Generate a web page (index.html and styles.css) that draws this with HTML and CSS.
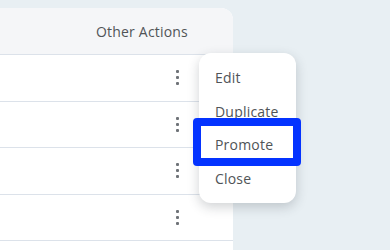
FILE: index.html
```html
<!DOCTYPE html>
<html>
<head>
<meta charset="utf-8">
<link rel="stylesheet" href="styles.css">
</head>
<body>
<div class="page">
  <div class="card">
    <div class="head">Other Actions</div>
    <div class="row"><span class="kebab"><i></i><i></i><i></i></span></div>
    <div class="row"><span class="kebab"><i></i><i></i><i></i></span></div>
    <div class="row"><span class="kebab"><i></i><i></i><i></i></span></div>
    <div class="row"><span class="kebab"><i></i><i></i><i></i></span></div>
    <div class="row"></div>
  </div>
  <ul class="menu">
    <li class="item">Edit</li>
    <li class="item">Duplicate</li>
    <li class="item focus">Promote</li>
    <li class="item">Close</li>
  </ul>
</div>
</body>
</html>
```
FILE: styles.css
```css
* { box-sizing: border-box; }
html, body { margin: 0; padding: 0; }
body {
  background: #e8eff3;
  font-family: "Open Sans", "Noto Sans", sans-serif;
  color: #505457;
  overflow: hidden;
  height: 250px;
}
.page {
  position: relative;
  width: 390px;
  height: 250px;
  padding-top: 8px;
  overflow: hidden;
}
.card {
  width: 253px;
  height: 242px;
  margin-left: -20px;
  background: #fff;
  border-top-right-radius: 12px;
  overflow: hidden;
}
.head {
  height: 47px;
  background: #f5f6f8;
  border-bottom: 1px solid #dce2ea;
  display: flex;
  align-items: center;
  justify-content: flex-end;
  padding-right: 45px;
  font-size: 14px;
  letter-spacing: 0.2px;
}
.row {
  height: 46.5px;
  border-bottom: 1px solid #dce2ea;
  display: flex;
  align-items: center;
  justify-content: flex-end;
  padding-right: 54px;
}
.kebab {
  display: flex;
  flex-direction: column;
  gap: 3px;
}
.kebab i {
  display: block;
  width: 3px;
  height: 3px;
  border-radius: 1px;
  background: #6f7378;
}
.menu {
  position: absolute;
  left: 199px;
  top: 53px;
  width: 97px;
  height: 150px;
  margin: 0;
  padding: 8px 0;
  list-style: none;
  background: #fff;
  border-radius: 12px;
  box-shadow: 0 4px 12px rgba(40, 50, 60, 0.22);
}
.item {
  position: relative;
  height: 33.5px;
  display: flex;
  align-items: center;
  padding-left: 16px;
  font-size: 14px;
  letter-spacing: 0.2px;
}
.focus::after {
  content: "";
  position: absolute;
  left: -6px;
  right: -5px;
  top: -10px;
  bottom: -4.5px;
  border: 8px solid #0433ff;
  border-radius: 4px;
}
```
